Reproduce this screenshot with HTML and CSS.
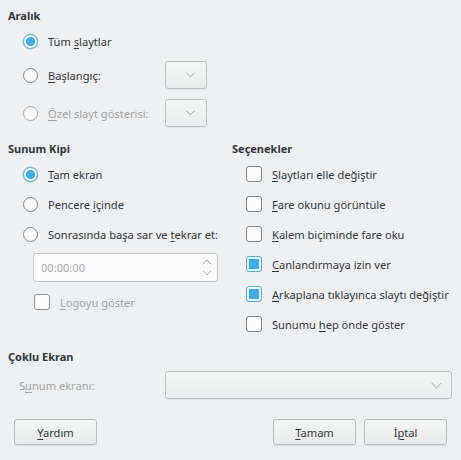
FILE: index.html
```html
<!DOCTYPE html>
<html lang="tr">
<head>
<meta charset="utf-8">
<title>Slayt Gösterisi</title>
<link rel="stylesheet" href="styles.css">
</head>
<body>
<div class="dialog">
  <div class="heading">Aralık</div>
  <div class="range">
    <div class="range-row r1">
      <span class="radio checked"></span><span class="lbl">Tüm <u>s</u>laytlar</span>
    </div>
    <div class="range-row r2">
      <div class="opt"><span class="radio"></span><span class="lbl"><u>B</u>aşlangıç:</span></div>
      <div class="combo small"><svg class="chev" width="9" height="6" viewBox="0 0 9 6"><path d="M0.5 0.8 L4.5 4.8 L8.5 0.8" fill="none" stroke="#9a9ea1" stroke-width="1"/></svg></div>
    </div>
    <div class="range-row r3">
      <div class="opt"><span class="radio disabled"></span><span class="lbl dis"><u>Ö</u>zel slayt gösterisi:</span></div>
      <div class="combo small"><svg class="chev" width="9" height="6" viewBox="0 0 9 6"><path d="M0.5 0.8 L4.5 4.8 L8.5 0.8" fill="none" stroke="#9a9ea1" stroke-width="1"/></svg></div>
    </div>
  </div>

  <div class="columns">
    <div class="col-left">
      <div class="heading">Sunum Kipi</div>
      <div class="list">
        <div class="row"><span class="radio checked"></span><span class="lbl"><u>T</u>am ekran</span></div>
        <div class="row"><span class="radio"></span><span class="lbl">Pencere <u>i</u>çinde</span></div>
        <div class="row"><span class="radio"></span><span class="lbl">Sonrasında başa sar ve <u>t</u>ekrar et:</span></div>
      </div>
      <div class="spin">
        <span class="spin-text">00:00:00</span>
        <svg class="spin-arrows" width="10" height="17" viewBox="0 0 10 17"><path d="M1 5 L5 1 L9 5" fill="none" stroke="#a6a9ac" stroke-width="1"/><path d="M1 12 L5 16 L9 12" fill="none" stroke="#a6a9ac" stroke-width="1"/></svg>
      </div>
      <div class="row logo"><span class="check disabled"></span><span class="lbl dis"><u>L</u>ogoyu göster</span></div>
    </div>
    <div class="col-right">
      <div class="heading">Seçenekler</div>
      <div class="list">
        <div class="row"><span class="check"></span><span class="lbl"><u>S</u>laytları elle değiştir</span></div>
        <div class="row"><span class="check"></span><span class="lbl"><u>F</u>are okunu görüntüle</span></div>
        <div class="row"><span class="check"></span><span class="lbl"><u>K</u>alem biçiminde fare oku</span></div>
        <div class="row"><span class="check checked"></span><span class="lbl"><u>C</u>anlandırmaya izin ver</span></div>
        <div class="row"><span class="check checked"></span><span class="lbl"><u>A</u>rkaplana tıklayınca slaytı değiştir</span></div>
        <div class="row"><span class="check"></span><span class="lbl">Sunumu <u>h</u>ep önde göster</span></div>
      </div>
    </div>
  </div>

  <div class="heading multi">Çoklu Ekran</div>
  <div class="screen-row">
    <span class="screen-lbl dis">S<u>u</u>num ekranı:</span>
    <div class="combo wide"><svg class="chev" width="11" height="7" viewBox="0 0 11 7"><path d="M0.5 0.8 L5.5 5.8 L10.5 0.8" fill="none" stroke="#a6a9ac" stroke-width="1"/></svg></div>
  </div>

  <div class="buttons">
    <button class="btn"><u>Y</u>ardım</button>
    <div class="spacer"></div>
    <button class="btn"><u>T</u>amam</button>
    <button class="btn">İ<u>p</u>tal</button>
  </div>
</div>
</body>
</html>
```
FILE: styles.css
```css
html, body {
  margin: 0;
  padding: 0;
  background: #eff0f1;
}
body {
  width: 461px;
  height: 460px;
  overflow: hidden;
  font-family: "Noto Sans", "DejaVu Sans", sans-serif;
  font-size: 11.1px;
  color: #31363b;
}
.dialog {
  padding: 8px 0 0 8px;
  display: flex;
  flex-direction: column;
}
u {
  text-decoration: underline;
  text-underline-offset: 2px;
}
.heading {
  height: 16px;
  line-height: 16px;
  font-weight: bold;
  font-size: 11px;
}
.range {
  padding-left: 15px;
  display: flex;
  flex-direction: column;
}
.range-row {
  display: flex;
  align-items: center;
  height: 28px;
}
.range-row.r1 { height: 26px; margin-top: 4px; }
.range-row.r2 { margin-top: 7px; }
.range-row.r3 { margin-top: 10px; }
.opt {
  display: flex;
  align-items: center;
  width: 142px;
}
.radio {
  box-sizing: border-box;
  width: 15px;
  height: 15px;
  border-radius: 50%;
  border: 1px solid #7f8386;
  background: #fcfcfc;
  flex: none;
}
.radio.checked {
  border-color: #3daee9;
  background: radial-gradient(circle, #3daee9 0, #3daee9 4.3px, #fcfcfc 4.8px);
  box-shadow: 0 0 0 0.5px rgba(61,174,233,0.5);
}
.radio.disabled { border-color: #a3a6a8; }
.lbl {
  margin-left: 10px;
  white-space: nowrap;
}
.dis { color: #a1a4a6; }
.combo {
  box-sizing: border-box;
  height: 28px;
  border: 1px solid #bdbfc1;
  border-radius: 3px;
  background: linear-gradient(#f4f5f5, #eaebec);
  box-shadow: 0 1px 1px rgba(0,0,0,0.06);
  display: flex;
  align-items: center;
  justify-content: flex-end;
}
.combo.small { width: 42px; padding-right: 11px; }
.combo.wide { width: 287px; padding-right: 9px; }
.columns {
  margin-top: 14px;
  display: grid;
  grid-template-columns: 224px 221px;
}
.col-left, .col-right {
  display: flex;
  flex-direction: column;
}
.list {
  margin-top: 2px;
  display: flex;
  flex-direction: column;
}
.row {
  height: 30px;
  display: flex;
  align-items: center;
}
.col-left .row { padding-left: 15px; }
.col-right .row { padding-left: 14px; }
.check {
  box-sizing: border-box;
  width: 16px;
  height: 16px;
  border: 1px solid #7f8386;
  border-radius: 3px;
  background: #fcfcfc;
  flex: none;
}
.check.checked {
  border-color: #3daee9;
  background: #fcfcfc;
  position: relative;
}
.check.checked::after {
  content: "";
  position: absolute;
  left: 2px;
  top: 2px;
  width: 10px;
  height: 10px;
  background: #3daee9;
}
.check.disabled { border-color: #8f9396; }
.spin {
  box-sizing: border-box;
  margin-top: 4px;
  margin-left: 25px;
  width: 185px;
  height: 29px;
  border: 1px solid #c3c5c7;
  border-radius: 3px;
  background: #fbfbfb;
  display: flex;
  align-items: center;
  justify-content: space-between;
  padding: 0 5px 0 7px;
}
.spin-text { color: #a6a9ab; }
.col-left .row.logo {
  margin-top: 5px;
  padding-left: 26px;
}
.heading.multi { margin-top: 10px; }
.screen-row {
  margin-top: 6px;
  display: flex;
  align-items: center;
}
.screen-lbl {
  width: 157px;
  padding-left: 11px;
  box-sizing: border-box;
  white-space: nowrap;
  flex: none;
}
.buttons {
  margin-top: 20px;
  display: flex;
  gap: 8px;
  padding: 0 14px 0 6px;
}
.spacer { flex: 1; }
.btn {
  box-sizing: border-box;
  width: 83px;
  height: 26px;
  border: 1px solid #b9bbbd;
  border-radius: 3px;
  background: linear-gradient(#f5f6f6, #e8e9ea);
  box-shadow: 0 1px 1px rgba(0,0,0,0.08);
  font-family: inherit;
  font-size: 11.1px;
  color: #31363b;
  padding: 0;
}
```
